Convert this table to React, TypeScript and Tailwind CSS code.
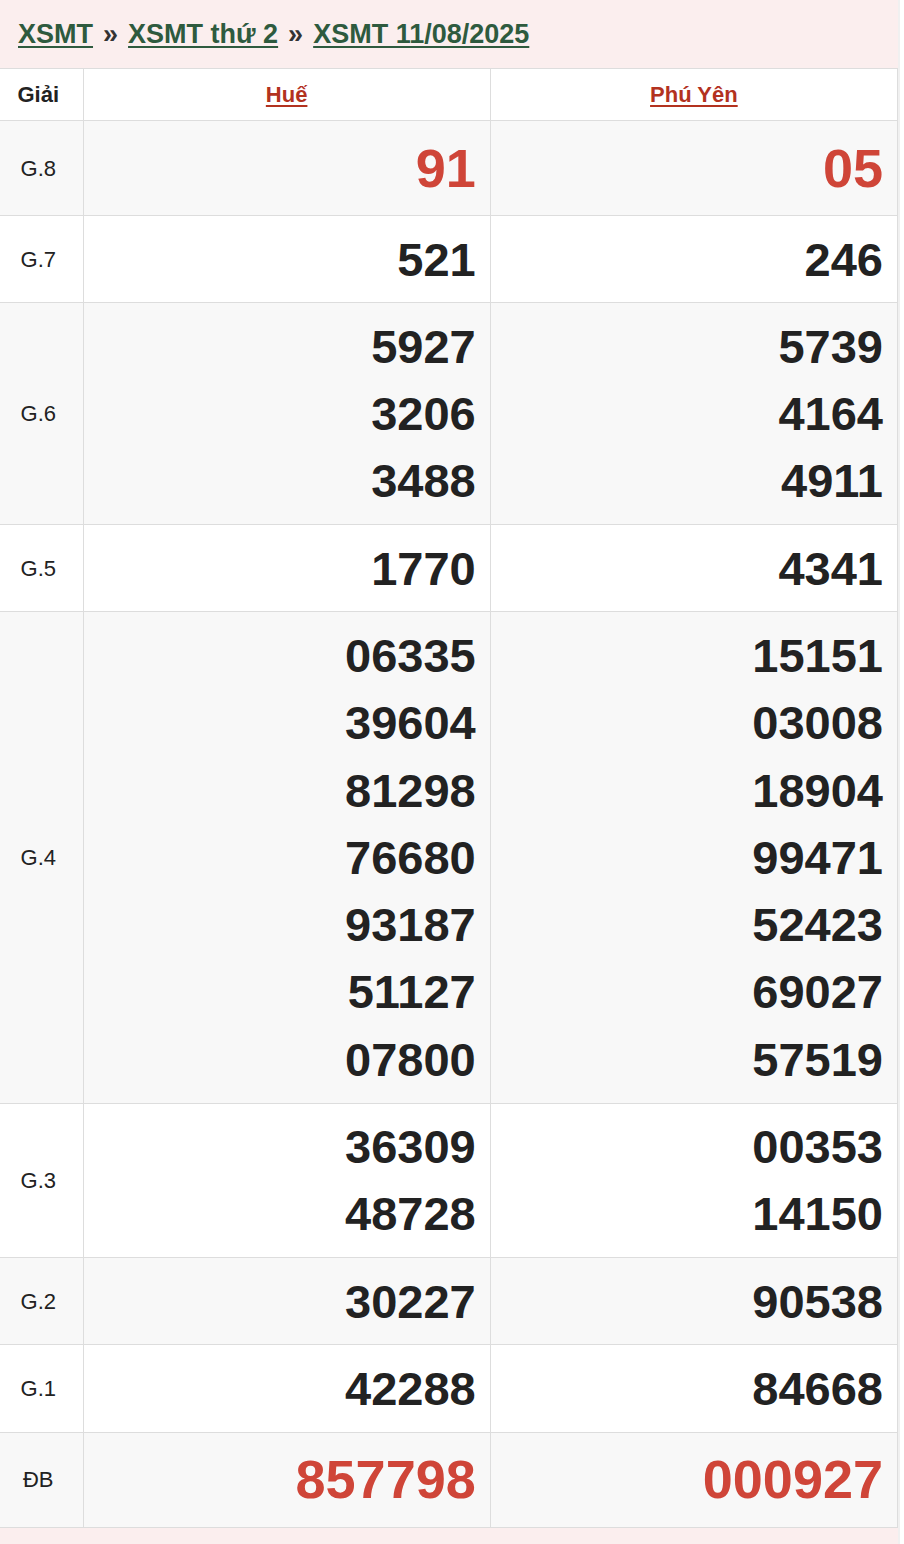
import React from "react"

type Row = { label: string; hue: string[]; phuyen: string[]; big?: boolean; red?: boolean }

const rows: Row[] = [
  { label: "G.8", hue: ["91"], phuyen: ["05"], big: true, red: true },
  { label: "G.7", hue: ["521"], phuyen: ["246"] },
  { label: "G.6", hue: ["5927", "3206", "3488"], phuyen: ["5739", "4164", "4911"] },
  { label: "G.5", hue: ["1770"], phuyen: ["4341"] },
  {
    label: "G.4",
    hue: ["06335", "39604", "81298", "76680", "93187", "51127", "07800"],
    phuyen: ["15151", "03008", "18904", "99471", "52423", "69027", "57519"],
  },
  { label: "G.3", hue: ["36309", "48728"], phuyen: ["00353", "14150"] },
  { label: "G.2", hue: ["30227"], phuyen: ["90538"] },
  { label: "G.1", hue: ["42288"], phuyen: ["84668"] },
  { label: "ĐB", hue: ["857798"], phuyen: ["000927"], big: true, red: true },
]

const NumberCell = ({ nums, row }: { nums: string[]; row: Row }) => (
  <td className="border border-[#dddddd] px-[14px] py-[9.5px] text-right align-middle">
    {nums.map((n) => (
      <div
        key={n}
        className={
          row.big
            ? "text-[54px] leading-[75px] font-bold text-[#cf4538]"
            : "text-[47px] leading-[67.3px] font-bold text-[#222222]"
        }
      >
        {n}
      </div>
    ))}
  </td>
)

export default function App() {
  return (
    <div className="w-[900px] bg-white border-r-2 border-[#f0f0f0]" style={{ fontFamily: '"Liberation Sans", Arial, sans-serif' }}>
      <div className="bg-[#fbeeee] h-[68px] flex items-center pl-[18px] text-[27px] font-bold">
        <a href="#" className="text-[#2e5a3e] underline underline-offset-[3px]">XSMT</a>
        <span className="text-[#333] mx-[10px]">»</span>
        <a href="#" className="text-[#2e5a3e] underline underline-offset-[3px]">XSMT thứ 2</a>
        <span className="text-[#333] mx-[10px]">»</span>
        <a href="#" className="text-[#2e5a3e] underline underline-offset-[3px]">XSMT 11/08/2025</a>
      </div>
      <table className="w-full border-collapse table-fixed">
        <colgroup>
          <col className="w-[83px]" />
          <col />
          <col />
        </colgroup>
        <thead>
          <tr className="bg-white h-[52px]">
            <th className="border border-l-0 border-[#dddddd] pr-[6px] text-[22px] font-bold text-[#222]">Giải</th>
            <th className="border border-[#dddddd] text-[22px] font-bold">
              <a href="#" className="text-[#b3321f] underline underline-offset-[3px]">Huế</a>
            </th>
            <th className="border border-[#dddddd] text-[22px] font-bold">
              <a href="#" className="text-[#b3321f] underline underline-offset-[3px]">Phú Yên</a>
            </th>
          </tr>
        </thead>
        <tbody>
          {rows.map((row, i) => (
            <tr key={row.label} className={i % 2 === 0 ? "bg-[#f8f8f8]" : "bg-white"}>
              <td className="border border-l-0 border-[#dddddd] pr-[6px] text-center text-[22px] text-[#222] align-middle">{row.label}</td>
              <NumberCell nums={row.hue} row={row} />
              <NumberCell nums={row.phuyen} row={row} />
            </tr>
          ))}
        </tbody>
      </table>
      <div className="bg-[#fbeeee] h-[16px]" />
    </div>
  )
}
